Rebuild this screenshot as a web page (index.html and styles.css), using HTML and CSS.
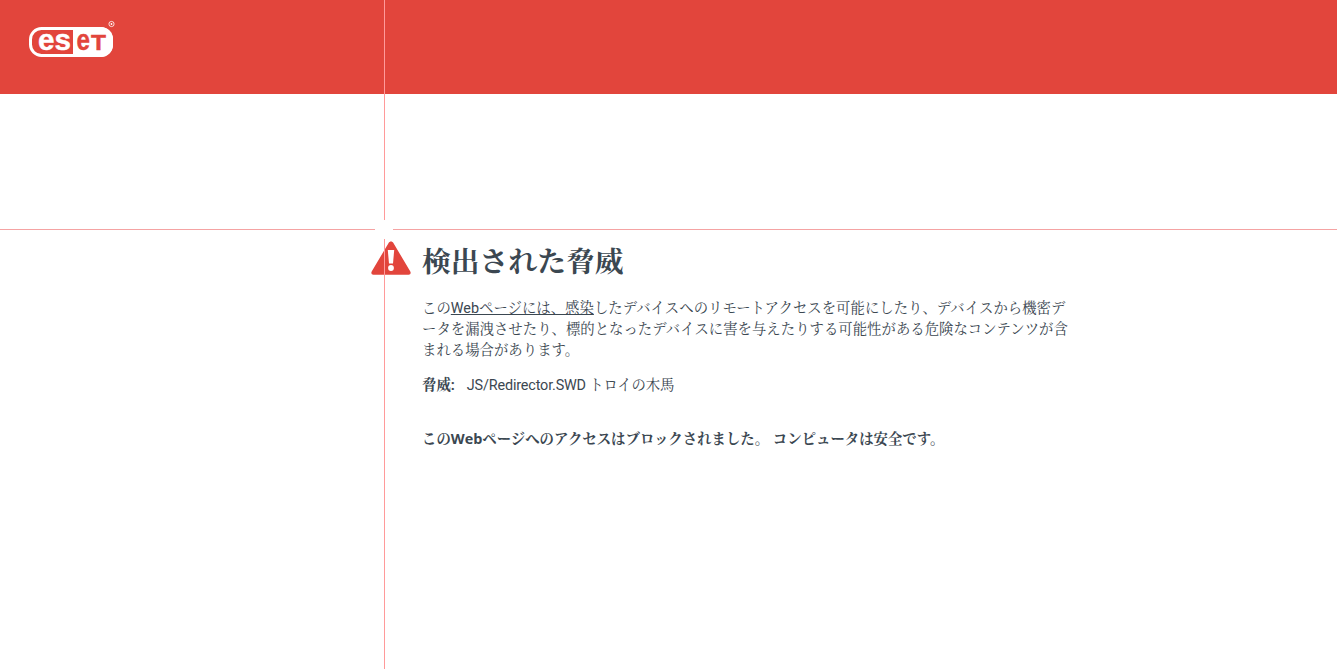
FILE: index.html
```html
<!DOCTYPE html>
<html lang="ja">
<head>
<meta charset="utf-8">
<title>ESET</title>
<link rel="stylesheet" href="styles.css">
</head>
<body>
<div class="guide-v"></div>
<div class="guide-h"></div>
<div class="guide-gap"></div>
<header class="header">
  <svg class="logo" width="90" height="42" viewBox="0 0 90 42">
    <rect x="1.500" y="10.500" width="81" height="27" rx="11" fill="none" stroke="#fff" stroke-width="3"/>
    <path d="M44 9H72A12 12 0 0 1 84 21V27A12 12 0 0 1 72 39H44Z" fill="#fff"/>
    <text class="logo-text" x="9" y="32" textLength="33" lengthAdjust="spacingAndGlyphs">es</text>
    <text class="logo-text logo-red" x="47.500" y="32" textLength="13.500" lengthAdjust="spacingAndGlyphs">e</text>
    <text class="logo-text logo-t logo-red" x="62" y="32" textLength="15" lengthAdjust="spacingAndGlyphs">T</text>
    <circle cx="82.500" cy="6" r="2.600" fill="none" stroke="#fff" stroke-width="0.800"/>
    <circle cx="82.500" cy="6" r="0.900" fill="#fff"/>
  </svg>
</header>
<main class="main">
  <svg class="warn" width="40" height="35" viewBox="0 0 40 35">
    <path d="M20 1.500C21 1.500 21.800 2 22.400 3L39.300 31.500C40.200 33 39.400 34.800 37.600 34.800H2.400C.6 34.800-.2 33 .7 31.500L17.600 3C18.200 2 19 1.500 20 1.500Z" fill="#e2453c"/>
    <path d="M16.800 10H23.200L22 23.500H18Z" fill="#fff"/>
    <circle cx="20" cy="28" r="2.900" fill="#fff"/>
  </svg>
  <div class="content">
    <h1 class="title">検出された脅威</h1>
    <p class="desc">この<span class="link">Webページには、感染</span>したデバイスへのリモートアクセスを可能にしたり、デバイスから機密データを漏洩させたり、標的となったデバイスに害を与えたりする可能性がある危険なコンテンツが含まれる場合があります。</p>
    <p class="threat"><strong class="threat-label">脅威:</strong><span class="threat-name">JS/Redirector.SWD トロイの木馬</span></p>
    <p class="blocked">このWebページへのアクセスはブロックされました。 コンピュータは安全です。</p>
  </div>
</main>
</body>
</html>
```
FILE: styles.css
```css
* { box-sizing: border-box; }
html, body { margin: 0; padding: 0; height: 100%; overflow: hidden; background: #fff; }
body {
  position: relative;
  font-family: Roboto, "Noto Serif CJK JP", "Liberation Serif", serif;
  color: #3b4751;
  font-size: 14.4px;
}
.header {
  height: 94px;
  background: #e2453c;
  padding: 18px 0 0 29px;
}
.logo { display: block; }
.logo-text {
  font-family: "Liberation Sans", sans-serif;
  font-weight: 700;
  font-size: 29px;
  fill: #fff;
  stroke: #fff;
  stroke-width: 0.400px;
}
.logo-t { font-size: 22px; }
.logo-red { fill: #e2453c; stroke: #e2453c; }
.guide-v { position: absolute; left: 384px; top: 0; bottom: 0; width: 1px; background: #ff9a9a; z-index: 2; }
.guide-h { position: absolute; left: 0; right: 0; top: 229px; height: 1px; background: #f5a3a3; z-index: 2; }
.guide-gap { position: absolute; left: 375px; top: 220px; width: 18px; height: 19px; background: #fff; z-index: 2; }
.main {
  display: flex;
  align-items: flex-start;
  padding: 146px 0 0 371px;
}
.warn { display: block; flex: none; }
.content { width: 650px; margin-left: 11px; margin-top: 1px; }
.title { margin: 0; font-size: 28.8px; line-height: 43px; font-weight: 700; }
.desc { margin: 14px 0 0; line-height: 21px; }
.link { text-decoration: underline; text-decoration-skip-ink: none; }
.threat { margin: 14px 0 0; line-height: 21px; }
.threat-label { font-weight: 700; margin-right: 12px; }
.threat-name { letter-spacing: -0.16px; }
.blocked { margin: 32px 0 0; font-weight: 700; line-height: 21px; font-family: "Open Sans", "Noto Serif CJK JP", serif; }
```
